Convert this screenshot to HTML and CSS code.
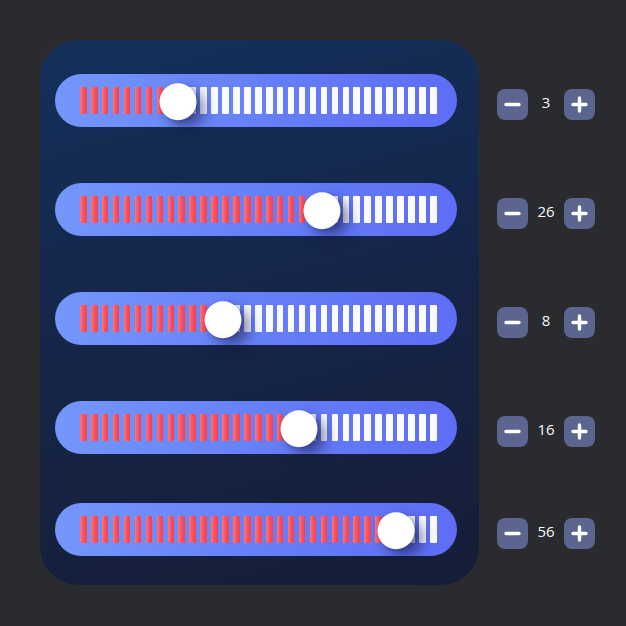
FILE: index.html
```html
<!DOCTYPE html>
<html lang="en">
<head>
    <meta charset="UTF-8">
    <meta name="viewport" content="width=device-width, initial-scale=1.0">
    <title>Level Sliders</title>
    <link rel="stylesheet" href="styles.css">
</head>
<body>
    <div class="board">
        <div class="panel">
            <div class="track"><div class="ticks" data-on="9"><div class="knob" style="left: 97.5px"></div></div></div>
            <div class="track"><div class="ticks" data-on="22"><div class="knob" style="left: 241.5px"></div></div></div>
            <div class="track"><div class="ticks" data-on="13"><div class="knob" style="left: 142.5px"></div></div></div>
            <div class="track"><div class="ticks" data-on="20"><div class="knob" style="left: 219px"></div></div></div>
            <div class="track"><div class="ticks" data-on="29"><div class="knob" style="left: 315.5px"></div></div></div>
        </div>

        <div class="controls">
            <div class="stepper"><button class="step">&minus;</button><span class="value">3</span><button class="step">+</button></div>
            <div class="stepper"><button class="step">&minus;</button><span class="value">26</span><button class="step">+</button></div>
            <div class="stepper"><button class="step">&minus;</button><span class="value">8</span><button class="step">+</button></div>
            <div class="stepper"><button class="step">&minus;</button><span class="value">16</span><button class="step">+</button></div>
            <div class="stepper"><button class="step">&minus;</button><span class="value">56</span><button class="step">+</button></div>
        </div>
    </div>

    <script>
        const TICK_COUNT = 33;

        const minusIcon = '<svg width="17" height="17" viewBox="0 0 17 17"><path d="M2 8.5h13" stroke="#fff" stroke-width="3.4" stroke-linecap="round"/></svg>';
        const plusIcon = '<svg width="17" height="17" viewBox="0 0 17 17"><path d="M2 8.5h13M8.5 2v13" stroke="#fff" stroke-width="3.4" stroke-linecap="round"/></svg>';

        // fill every track with its bars, red up to the knob
        document.querySelectorAll(".ticks").forEach(function (row) {
            const on = parseInt(row.dataset.on, 10);
            const knob = row.querySelector(".knob");
            for (let i = 0; i < TICK_COUNT; i++) {
                const tick = document.createElement("span");
                tick.className = i < on ? "tick on" : "tick";
                row.insertBefore(tick, knob);
            }
        });

        document.querySelectorAll(".stepper").forEach(function (stepper) {
            const buttons = stepper.querySelectorAll(".step");
            buttons[0].innerHTML = minusIcon;
            buttons[1].innerHTML = plusIcon;
        });
    </script>
</body>
</html>
```

FILE: styles.css
```css
/* Dark page */
body {
    margin: 0;
    padding: 0;
    background: #2a2b2f;
    font-family: "Open Sans", "Noto Sans", sans-serif;
    height: 626px;
}

.board {
    display: flex;
    align-items: flex-start;
    gap: 18px;
    padding: 40px 0 0 40px;
}

/* Navy panel holding the sliders */
.panel {
    width: 439px;
    height: 545px;
    box-sizing: border-box;
    padding: 34px 22px 0 15px;
    border-radius: 38px;
    background: linear-gradient(165deg, #13305b 0%, #15264a 45%, #161d36 100%);
    display: flex;
    flex-direction: column;
    gap: 56px;
}

.track {
    height: 53px;
    border-radius: 27px;
    background: linear-gradient(90deg, #7497fb 0%, #6680f8 50%, #5e6df5 100%);
    padding: 0 20px 0 25px;
    display: flex;
    align-items: center;
}

.track:last-child {
    margin-top: -7px;
}

.ticks {
    position: relative;
    flex: 1;
    height: 27px;
    display: flex;
    justify-content: space-between;
}

.tick {
    flex: none;
    width: 6.6px;
    border-radius: 1px;
    background: #fbfbff;
}

.tick.on {
    background: linear-gradient(90deg, #ff7676 0%, #f84f5e 55%, #f0414f 100%);
}

/* Round handle */
.knob {
    position: absolute;
    top: 50%;
    width: 37px;
    height: 37px;
    border-radius: 50%;
    background: radial-gradient(circle at 45% 40%, #ffffff 60%, #eef0f6 100%);
    transform: translate(-50%, -48%);
    box-shadow: 8px 7px 14px rgba(18, 20, 60, 0.55), 1px 1px 3px rgba(18, 20, 60, 0.25);
}

/* Plus / minus steppers */
.controls {
    display: flex;
    flex-direction: column;
    gap: 56px;
    padding-top: 38px;
}

.stepper {
    height: 53px;
    display: flex;
    align-items: center;
}

.stepper:last-child {
    margin-top: -7px;
}

.step {
    width: 31px;
    height: 31px;
    padding: 0;
    border: none;
    border-radius: 8px;
    background: #5b6590;
    display: flex;
    align-items: center;
    justify-content: center;
}

.value {
    width: 36px;
    text-align: center;
    color: #f4f5f8;
    font-size: 15px;
    line-height: 1;
    margin-top: -4px;
}
```
